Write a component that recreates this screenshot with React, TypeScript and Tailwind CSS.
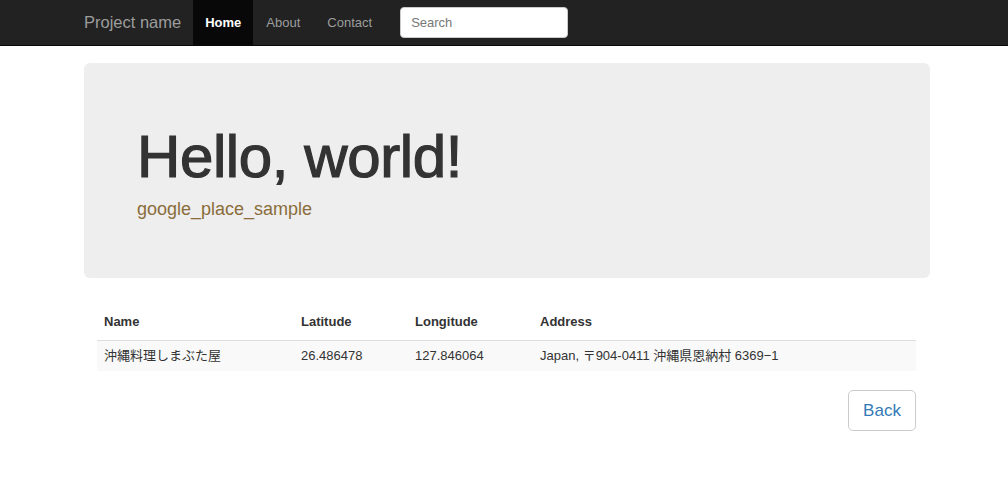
import React from 'react';

const rows = [
  {
    name: '沖縄料理しまぶた屋',
    lat: '26.486478',
    lng: '127.846064',
    address: 'Japan, 〒904-0411 沖縄県恩納村 6369−1',
  },
];

const NavBar = () => (
  <nav className="h-[46px] bg-[#222222] border-b border-[#080808]">
    <div className="w-[846px] ml-[84px] flex items-center h-[45px]">
      <a className="text-[16.5px] text-[#9d9d9d] mr-[12px]">Project name</a>
      <ul className="flex h-full text-[13px]">
        <li className="h-full flex items-center px-[12px] bg-[#080808] text-white font-bold">Home</li>
        <li className="h-full flex items-center pl-[13px] pr-[14px] text-[#9d9d9d]">About</li>
        <li className="h-full flex items-center px-[13px] text-[#9d9d9d]">Contact</li>
      </ul>
      <input
        className="ml-[15px] w-[168px] h-[31px] bg-white rounded-[4px] border border-[#ccc] px-[10px] text-[13px] text-[#555] placeholder:text-[#777] outline-none"
        placeholder="Search"
      />
    </div>
  </nav>
);

const App = () => {
  return (
    <div className="min-h-[480px] bg-white font-['Liberation_Sans','Noto_Sans_CJK_JP',sans-serif] text-[#333]">
      <NavBar />
      <div className="w-[846px] ml-[84px] pt-[17px]">
        <div className="bg-[#eeeeee] rounded-[6px] h-[215px] pl-[53px] pt-[58px]">
          <h1 className="text-[60px] leading-[72px] text-[#333] tracking-[-0.4px] [-webkit-text-stroke:1.2px_#333]">
            Hello, world!
          </h1>
          <p className="text-[18px] leading-[26px] text-[#8a6d3b] mt-[3px]">google_place_sample</p>
        </div>

        <div className="pl-[13px] pr-[14px] mt-[26px]">
          <table className="w-full text-[13px] border-collapse">
            <thead>
              <tr className="text-left">
                <th className="w-[197px] px-[7px] py-[8px] font-bold border-b border-[#ddd]">Name</th>
                <th className="w-[114px] px-[7px] py-[8px] font-bold border-b border-[#ddd]">Latitude</th>
                <th className="w-[125px] px-[7px] py-[8px] font-bold border-b border-[#ddd]">Longitude</th>
                <th className="px-[7px] py-[8px] font-bold border-b border-[#ddd]">Address</th>
              </tr>
            </thead>
            <tbody>
              {rows.map((r) => (
                <tr key={r.name} className="bg-[#f9f9f9]">
                  <td className="px-[7px] h-[31px]">{r.name}</td>
                  <td className="px-[7px] h-[31px]">{r.lat}</td>
                  <td className="px-[7px] h-[31px]">{r.lng}</td>
                  <td className="px-[7px] h-[31px]">{r.address}</td>
                </tr>
              ))}
            </tbody>
          </table>
          <div className="flex justify-end mt-[19px]">
            <button className="w-[68px] h-[41px] border border-[#ccc] rounded-[5px] bg-white text-[17px] text-[#337ab7]">
              Back
            </button>
          </div>
        </div>
      </div>
    </div>
  );
};

export default App;
